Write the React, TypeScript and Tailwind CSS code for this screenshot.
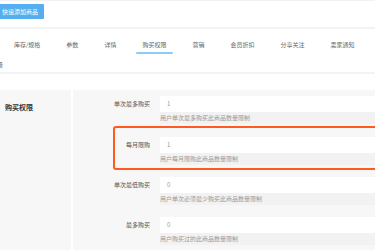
const tabs = ['库存/规格', '参数', '详情', '购买权限', '营销', '会员折扣', '分享关注', '卖家通知'];

const rows = [
  { label: '单次最多购买', value: '1', help: '用户单次最多购买此商品数量限制' },
  { label: '每月限购', value: '1', help: '用户每月限购此商品数量限制' },
  { label: '单次最低购买', value: '0', help: '用户单次必须最少购买此商品数量限制' },
  { label: '最多购买', value: '0', help: '用户购买过的此商品数量限制' },
];

function Field({ label, value, help }: { label: string; value: string; help: string }) {
  return (
    <div className="flex">
      <div className="w-[35px] shrink-0 h-[16px] flex items-center justify-end whitespace-nowrap text-[#555]">
        {label}
      </div>
      <div className="ml-[10px] flex-1 flex flex-col">
        <div className="h-[16px] bg-white flex items-center pl-[7px] text-[#999]">{value}</div>
        <div className="h-[12px] bg-[#f2f2f2] flex items-center text-[#999]">{help}</div>
      </div>
    </div>
  );
}

export default function App() {
  return (
    <div
      className="w-[375px] h-[250px] overflow-hidden bg-white text-[6px] leading-none"
      style={{ fontFamily: '"Noto Sans CJK SC", "Noto Sans", sans-serif' }}
    >
      {/* toolbar */}
      <div className="h-[27px] border-t border-[#f2f2f2] pt-[3px]">
        <button className="-ml-[4px] h-[15px] px-[6px] bg-[#55aef0] text-white text-[6px] rounded-[1px]">
          快速添加商品
        </button>
      </div>
      <div className="h-[2px] bg-[#f3f3f3]" />

      {/* tabs */}
      <div className="h-[28px] flex ml-[1px] whitespace-nowrap">
        {tabs.map((t) => (
          <div key={t} className="relative px-[13px] flex items-center pt-[4px] text-[#666]">
            {t}
            {t === '购买权限' && (
              <div className="absolute left-[7px] right-[6px] bottom-[3px] h-[2px] bg-[#8ccbf5] rounded-full" />
            )}
          </div>
        ))}
      </div>

      <div className="h-[15px] flex items-center text-[#666]">
        <span className="-ml-[3px]">级</span>
      </div>
      <div className="h-[2px] bg-[#f3f3f3]" />
      <div className="h-[16px]" />

      {/* content */}
      <div className="flex h-[160px]">
        <div className="w-[71px] shrink-0 bg-[#f7f7f7] pl-[5px] pt-[14px] text-[7px] font-bold text-[#333]">
          购买权限
        </div>
        <div className="w-[2px] shrink-0 bg-white" />
        <div className="w-[302px] shrink-0 overflow-hidden bg-[#f7f7f7] pt-[6px] pl-[40px]">
          <div className="pl-[2px]">
            <Field {...rows[0]} />
          </div>
          <div className="mt-[2px] w-[400px] border-2 border-[#ff5a1f] rounded-[3px] pt-[9px] pb-[3px]">
            <Field {...rows[1]} />
          </div>
          <div className="mt-[7px] pl-[2px]">
            <Field {...rows[2]} />
          </div>
          <div className="mt-[12px] pl-[2px]">
            <Field {...rows[3]} />
          </div>
        </div>
      </div>
    </div>
  );
}
